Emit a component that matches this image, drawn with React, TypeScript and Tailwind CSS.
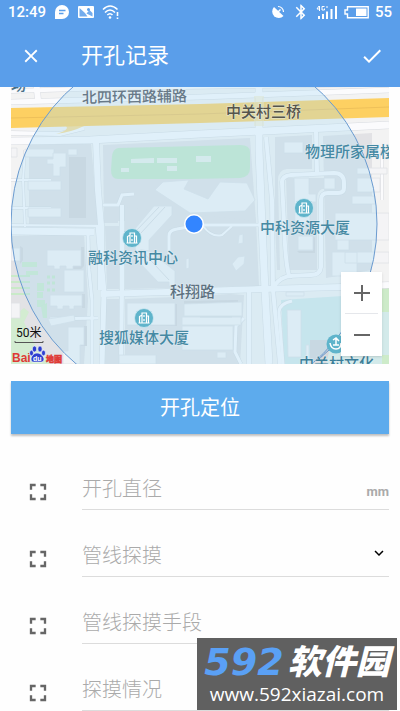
import type { ReactNode } from 'react'
import { MdBluetooth, MdCheck, MdClose, MdExpandMore, MdFullscreen } from 'react-icons/md'

const ROADS = [
  { d: 'M11 102 L200 97 L389 90', w: 5 },
  { d: 'M11 91 L110 88 L389 84', w: 4 },
  { d: 'M36 80 L38 100', w: 6 },
  { d: 'M11 133 L60 134 L84 128', w: 4 },
  { d: 'M11 141 L90 140 L200 134 L389 125', w: 7 },
  { d: 'M96 142 L98 190 L101 225 L101 290', w: 6 },
  { d: 'M11 231 L94 232', w: 7 },
  { d: 'M11 225 L98 226', w: 2 },
  { d: 'M25 150 L23 180 L25 227', w: 2 },
  { d: 'M11 180 H51', w: 2 },
  { d: 'M11 208 H51', w: 2 },
  { d: 'M88 234 L89 270 L92 300 L92 364', w: 3 },
  { d: 'M98 226 L104 292 L102 364', w: 5 },
  { d: 'M122 205 L122 290 L121 364', w: 4 },
  { d: 'M169 262 V236 Q169 230 177 229 L200 225 L262 225', w: 3 },
  { d: 'M203 226 Q212 238 222 235 L232 226', w: 2 },
  { d: 'M101 294 L200 291 L260 289 L342 287 L389 285', w: 6 },
  { d: 'M103 205 L118 205 L122 195 L134 194', w: 3 },
  { d: 'M50 319 L98 318', w: 3 },
  { d: 'M259 80 L259 150 L262 225 L265 290 L269 364', w: 7 },
  { d: 'M266 137 L272 200 L273 290 L280 364', w: 4 },
  { d: 'M249 290 L249 364', w: 4 },
  { d: 'M244 318 L236 326 L235 352 L241 364', w: 3 },
  { d: 'M316 132 L317 172', w: 4 },
  { d: 'M284 222 L282 182 Q282 176 291 175 L334 173 Q344 173 344 183 L344 188 Q344 193 338 193 L328 193 Q321 193 321 200 L321 267 Q320 275 311 275 L289 276 Q285 260 284 222', w: 4 },
  { d: 'M274 286 Q281 276 292 276', w: 4 },
  { d: 'M292 301 Q279 304 279 312 L283 364', w: 3 },
  { d: 'M382 150 V200', w: 2 },
]

const BUILDINGS = [
  'M25 149 H54 V157 H25 Z M68 149 H77 V155 H68 Z',
  'M47 159 H53 V153 H66 V167 H60 V176 H53 V164 H47 Z',
  'M28 181 H61 V190 H28 Z M28 208 H61 V217 H28 Z M11 148 H17 V157 H11 Z',
  'M47 250 H81 V266 H73 V269 H66 V266 H60 V269 H54 V266 H47 Z',
  'M64 270 H84 V292 H64 Z M50 295 H82 V306 H74 V309 H69 V306 H63 V309 H57 V306 H50 Z',
  'M48 319 L74 315 L75 321 L51 326 Z M68 327 H84 V345 H80 V364 H63 V351 H68 Z',
  'M11 248 H20 V261 H11 Z M11 303 H20 V318 H11 Z',
  'M155 190 L163 182 L189 180 L184 189 L208 199 L220 182 L247 183 L255 200 L245 211 L190 213 Z',
  'M154 206 H172 V215 L149 240 V251 L175 271 V286 H169 V282 H158 L136 259 L134 230 Z',
  'M239 235 L243 234 V243 L238 244 Z M232 264 L238 257 L245 256 L244 264 L236 271 Z M186 259 L189 258 V268 L186 269 Z',
  'M127 303 H175 V325 H127 Z M184 304 L242 302 V316 H184 Z M182 317 H241 V325 H182 Z',
  'M182 326 H233 V350 H182 Z M217 352 H226 V358 H217 Z M119 355 H156 V364 H119 Z',
  'M284 142 H303 V153 H284 Z M294 178 H309 V194 H316 V202 H310 V224 H295 Z M324 178 H335 V189 H324 Z',
  'M298 236 H313 V250 H298 Z M337 236 H349 V250 H337 Z M332 252 H357 V276 H332 Z M345 252 H389 V263 H345 Z',
  'M286 292 H304 V296 H286 Z M287 310 H301 V357 H288 Z M306 345 H309 V364 H306 Z',
  'M357 168 H387 V174 H357 Z M357 178 H380 V192 H357 Z M352 196 H375 V204 H352 Z M335 213 H389 V240 H335 Z',
]

const BLOCKS = [
  'M29 145 L91 143 L98 224 L29 225 Z',
  'M103 145 L250 138 L256 221 L104 221 Z',
  'M104 209 H118 V223 H104 Z',
  'M11 236 L84 234 L88 300 L84 364 H11 Z',
  'M105 226 H119 V289 H107 Z',
  'M125 207 L256 221 L259 286 L125 289 Z',
  'M125 299 L175 297 L230 294 L244 295 L240 364 H125 Z',
  'M275 137 L312 135 V169 L287 169 Q278 170 278 180 L280 270 H277 L275 222 Z',
  'M286 178 H340 V188 L322 189 Q317 191 317 200 V270 H289 Z',
  'M323 136 L372 133 V270 L326 278 Z',
  'M106 299 H119 V364 H105 Z',
]

// building shadows and darker yards
const SHADES = [
  'M69 157h17v61H69z',
  'M81 247h3v19l-3 3zM73 266h8v3h-8zM82 294h3v14h-3zM84 326h3v20h-7l4-3z',
  'M20 246l3 2v12l-3 4zM175 304h2v22h-50l48-1zM313 236v15h-16l2 2h16v-15z',
  'M310 340h22l-6 24h-16zM149 225l8-9M184 301l54-1v2l-54 2z',
]

type Label = { text: string; x: number; y: number; color: string; tilt?: number }

const LABELS: Label[] = [
  { text: '场', x: 11, y: 90, color: '#4a6f86' },
  { text: '北四环西路辅路', x: 82, y: 103, color: '#677988', tilt: -1 },
  { text: '中关村三桥', x: 226, y: 117, color: '#55544b' },
  { text: '物理所家属楼', x: 305, y: 157, color: '#4589a3' },
  { text: '中科资源大厦', x: 260, y: 233, color: '#4589a3' },
  { text: '融科资讯中心', x: 88, y: 263, color: '#4589a3' },
  { text: '科翔路', x: 170, y: 297, color: '#5d7180' },
  { text: '搜狐媒体大厦', x: 99, y: 343, color: '#4589a3' },
  { text: '中关村文化', x: 299, y: 369, color: '#3c7f99' },
]

const POIS = [
  [132, 238],
  [304, 208],
  [144, 318],
]

function StatusBar() {
  return (
    <div className="flex h-6 items-center justify-between px-2 text-base">
      <div className="flex items-center gap-2">
        <span className="text-[15px] font-medium">12:49</span>
        <svg className="size-4" viewBox="0 0 16 16">
          <path d="M8 1a7 7 0 1 1 0 14H1V8a7 7 0 0 1 7-7Z" fill="currentColor" />
          <path d="M5 6.500h6.500M5 9.500h4.500" stroke="#5a9eea" strokeWidth="1.500" />
        </svg>
        <svg className="h-4 w-4" viewBox="0 0 16 16">
          <rect y="2" width="16" height="12" rx="1" fill="currentColor" />
          <path d="M1.500 12.500V4L7 9L9.500 12.500Z M8.500 9.500L14.500 12.500V9L11.500 6Z" fill="#5a9eea" opacity=".85" />
          <circle cx="10.500" cy="5.500" r="1.500" fill="#5a9eea" />
        </svg>
        <svg className="h-4 w-[18px]" viewBox="0 0 18 16" fill="none" stroke="currentColor" strokeWidth="1.600">
          <path d="M1 5.500Q8 -1.500 15.500 5.500M3 8.500Q8 3.500 13 8.500M5.300 11Q8 8.500 10.500 11" />
          <circle cx="8" cy="13.500" r="1.300" fill="currentColor" stroke="none" />
          <path d="M15.500 8V12M15.500 13.500V15" />
        </svg>
      </div>
      <div className="flex items-center gap-1.5">
        <svg className="size-4" viewBox="0 0 16 16">
          <path d="M4 3L13.500 12A6.500 6.500 0 1 1 4 3Z" fill="currentColor" />
          <path d="M8 2.500A5.500 5.500 0 0 1 13.500 8" fill="none" stroke="currentColor" strokeWidth="1.200" />
          <path d="M8 8L10.500 5.500" stroke="currentColor" strokeWidth="1.500" />
        </svg>
        <MdBluetooth className="size-[18px]" />
        <svg className="h-4 w-[22px]" viewBox="0 0 22 16" fill="currentColor">
          <path d="M2 12h2v3H2zM6 10h2v5H6zM10 7.500h2v7.500h-2zM14.500 5h2v10h-2zM19 2h2v13h-2z" />
          <path d="M3 2L1 5H4M3.500 2V7M8.500 2.500H6V6H8.500V4.500M11 2v2" fill="none" stroke="currentColor" />
        </svg>
        <svg className="h-4 w-[25px]" viewBox="0 0 25 16">
          <path d="M3.500 2.800H24.200V13.700H3.500V10H1V6H3.500Z" fill="none" stroke="currentColor" strokeWidth="1.400" />
          <rect x="12" y="4.500" width="10.500" height="7.500" fill="currentColor" />
        </svg>
        <span className="text-[15px] font-medium">55</span>
      </div>
    </div>
  )
}

function CampusMap() {
  return (
    <div className="relative h-[277px] overflow-hidden bg-[#f3f3f3]">
      <svg className="h-full w-full" viewBox="11 87 378 277" preserveAspectRatio="xMidYMid slice">
        {BLOCKS.map((d) => (
          <path key={d} d={d} fill="#e2e2e5" />
        ))}
        <path d="M281 300 L389 293 V364 H284 Z" fill="#d3eaea" />
        <path d="M382 286 H389 V312 H382 Z M382 355 H389 V364 H382 Z" fill="#cdebc9" />
        <path d="M22 262H37V267H22ZM26 271H38V275H26ZM37 283H44V291H37ZM37 300H45V307H37ZM37 292H43V298H37Z" fill="#cdebcb" />
        <path d="M11 318L24 308L29 312L24 322L35 345L50 364H11Z" fill="#d3ecd1" />
        <path d="M41 306L47 303V318H43Z" fill="#cdebcb" />
        {[276, 282, 288, 294].map((y) => (
          <path key={y} d={`M11 ${y}H30`} stroke="#c9eac8" strokeWidth="2" />
        ))}
        {[277, 283, 290].map((y) => (
          <path key={y} d={`M47 ${y}H55`} stroke="#c9eac8" strokeWidth="3" strokeDasharray="3 2" />
        ))}
        <path d="M118 148L240 145Q250 145 250 152V168Q250 177 240 178L190 179H118Q111 179 111 170L112 156Q113 149 118 148Z" fill="#c4e9c9" />
        <path d="M131 159l23-1v5h-23zM157 158h20v5h-20zM167 166h10v5h-10zM121 168h8v4h-8zM196 156h15v6h-15z" fill="#e9f2ea" />
        {ROADS.map((r) => (
          <path key={r.d} d={r.d} fill="none" stroke="#d8dbe0" strokeWidth={r.w + 1} />
        ))}
        {ROADS.map((r) => (
          <path key={r.d} d={r.d} fill="none" stroke="#fbfbfd" strokeWidth={r.w} />
        ))}
        <path d="M56 134 Q72 132 84 126 L66 126 Q70 130 56 134Z" fill="#fbdd90" />
        <path d="M11 108 L200 104 L389 98 V117 L200 123 L11 128 Z" fill="#fdd062" />
        <path d="M11 118 L200 114 L389 107" stroke="#eec05a" fill="none" />
        <path d="M254 96H264V126H254Z" fill="#f6e9bd" opacity=".5" />
        {SHADES.map((d) => (
          <path key={d} d={d} fill="#d6d6da" />
        ))}
        {BUILDINGS.map((d) => (
          <path key={d} d={d} fill="#f4f4f6" stroke="#e0e2e6" strokeWidth=".8" />
        ))}
        <path d="M159 207L136 231M165 207L141 233M149 251L141 250L169 280M141 250L136 252M200 317H232" stroke="#dadde1" fill="none" />

        {/* accuracy radius */}
        <circle cx="194" cy="224" r="183" fill="#aedcf2" fillOpacity=".34" stroke="#6b9bd0" />

        {POIS.map(([x, y]) => (
          <g key={x} transform={`translate(${x} ${y})`}>
            <circle r="9.500" fill="#5fb4cb" stroke="#cfe8f1" strokeWidth=".8" />
            <path d="M-4.500 5V-1.500L-2 -3V5M-2 5V-5H2.500V5M2.500 -2H4.500V5M-5.500 5H5.500M0 -3V-1M0 1V3" fill="none" stroke="#fff" strokeWidth="1.200" />
          </g>
        ))}
        <path d="M319 359L330 349" stroke="#5d93cb" />
        <circle cx="336" cy="344" r="9.500" fill="#5fb4cb" />
        <path d="M330 343Q331 349 336 349Q341 349 341 343M333 345H339M336 338V345M333 340L336 338L339 341" fill="none" stroke="#fff" strokeWidth="1.500" />

        <g fontSize="15" fontWeight="500" stroke="#e6f0f6" strokeOpacity=".5" strokeWidth="1.500" strokeLinejoin="round" paintOrder="stroke">
          {LABELS.map((l) => (
            <text key={l.text} x={l.x} y={l.y} fill={l.color} transform={`rotate(${l.tilt ?? 0} ${l.x} ${l.y})`}>
              {l.text}
            </text>
          ))}
        </g>

        <circle cx="194" cy="224" r="10" fill="#fff" />
        <circle cx="194" cy="224" r="8.500" fill="#3385ff" />

        <text x="16" y="337" fontSize="12" fill="#111">50米</text>
        <path d="M15 341V342.500H43V341" fill="none" stroke="#555" />
        <text x="12" y="362" fontSize="12" fontWeight="700" fill="#df3a35" fontFamily="Liberation Sans, sans-serif">Bai</text>
        <g fill="#2d3fd0" stroke="#fff" strokeWidth=".6">
          <path d="M37 353C41 353 44 357 44 359C44 363 40 362 37 362C34 362 31 363 31 359C31 357 33 353 37 353Z" />
          <ellipse cx="31.500" cy="353" rx="2" ry="2.800" />
          <ellipse cx="34.500" cy="349" rx="2.200" ry="3" />
          <ellipse cx="40" cy="349" rx="2.200" ry="3" />
          <ellipse cx="43.500" cy="353" rx="2" ry="2.800" />
        </g>
        <text x="33" y="361" fontSize="7" fontWeight="700" fill="#fff" fontFamily="Liberation Sans, sans-serif">du</text>
        <text x="46" y="362" fontSize="8" fontWeight="900" fill="#df3a35" stroke="#df3a35" strokeWidth=".5">地图</text>
      </svg>

      <div className="absolute bottom-2 right-[7px] flex w-[41px] flex-col divide-y divide-gray-200 bg-white px-1 shadow-sm">
        <ZoomButton label="放大">
          <path d="M0 8H16M8 0V16" />
        </ZoomButton>
        <ZoomButton label="缩小">
          <path d="M0 8H16" />
        </ZoomButton>
      </div>
    </div>
  )
}

function ZoomButton({ label, children }: { label: string; children: ReactNode }) {
  return (
    <button type="button" aria-label={label} className="flex h-[42px] items-center justify-center text-[#666]">
      <svg className="size-4" viewBox="0 0 16 16" fill="none" stroke="currentColor" strokeWidth="2">
        {children}
      </svg>
    </button>
  )
}

function FieldRow({ children }: { children: ReactNode }) {
  return (
    <div className="flex h-[67px] pl-[13px]">
      <div className="flex w-[58px] shrink-0 items-end pb-1">
        <MdFullscreen className="size-7 text-[#666]" />
      </div>
      <div className="relative flex flex-1 items-end border-b border-[#dcdcdc]">{children}</div>
    </div>
  )
}

const control = 'h-10 w-full appearance-none bg-transparent text-xl font-light text-[#aaa] outline-none placeholder:text-[#aaa]'

export default function App() {
  return (
    <div className="relative min-h-screen bg-[#fefefe] font-['Roboto','Noto_Sans_CJK_SC',sans-serif]">
      <header className="bg-[#5a9eea] text-white">
        <StatusBar />
        <div className="flex h-[63px] items-center px-5">
          <button type="button" aria-label="关闭">
            <MdClose className="size-[22px]" />
          </button>
          <h1 className="ml-[39px] flex-1 text-[22px]">开孔记录</h1>
          <button type="button" aria-label="确定" className="-mr-1">
            <MdCheck className="size-6" stroke="currentColor" />
          </button>
        </div>
      </header>

      <main className="px-[11px]">
        <CampusMap />
        <button type="button" className="mt-[17px] block h-[53px] w-full bg-[#5dabed] text-xl text-white shadow-[0_2px_2px_rgba(0,0,0,0.25)]">
          开孔定位
        </button>

        <form className="mt-[9px]">
          <FieldRow>
            <input aria-label="开孔直径" placeholder="开孔直径" className={control} />
            <span className="pb-2 text-[13px] font-bold text-[#aaa]">mm</span>
          </FieldRow>
          <FieldRow>
            <select aria-label="管线探摸" className={control}>
              <option>管线探摸</option>
            </select>
            <MdExpandMore className="pointer-events-none absolute bottom-[14px] right-px size-[18px] text-black" stroke="currentColor" />
          </FieldRow>
          <FieldRow>
            <input aria-label="管线探摸手段" placeholder="管线探摸手段" className={control} />
          </FieldRow>
          <FieldRow>
            <input aria-label="探摸情况" placeholder="探摸情况" className={control} />
          </FieldRow>
        </form>
      </main>

      <div className="absolute bottom-px right-[3px] flex h-[72px] w-[200px] flex-col items-center justify-center bg-[#606060] text-white">
        <div className="flex items-center gap-1 text-[34px] font-black italic leading-10">
          <span className="font-['DejaVu_Sans'] text-[38px] font-bold text-[#5aa0f5]">592</span>
          <span>软件园</span>
        </div>
        <span className="font-['Open_Sans'] text-[19px] font-medium leading-6">www.592xiazai.com</span>
      </div>
    </div>
  )
}
